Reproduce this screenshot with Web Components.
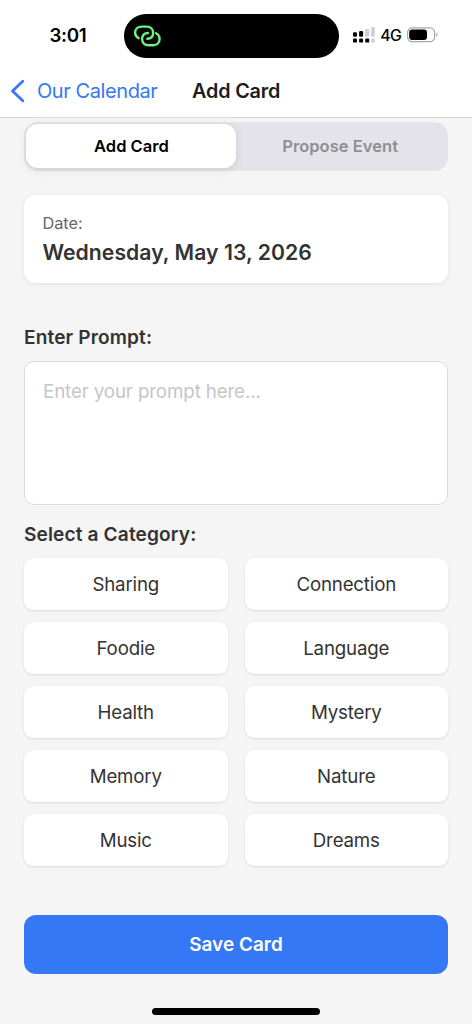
<!DOCTYPE html>
<html lang="en">
<head>
<meta charset="utf-8">
<title>Add Card</title>
<style>
html, body { margin: 0; height: 100%; background: #f5f5f5; }
body { font-family: Inter, "Liberation Sans", sans-serif; color: #333; overflow: hidden; }
</style>
</head>
<body>
<add-card-screen></add-card-screen>
<script>
function define(name, html) {
  const template = document.createElement('template');
  template.innerHTML = html;
  customElements.define(name, class extends HTMLElement {
    constructor() {
      super();
      this.attachShadow({ mode: 'open' }).appendChild(template.content.cloneNode(true));
    }
  });
}

define('status-bar', `
<style>
:host { display: grid; grid-template-columns: 124px 215px 1fr; height: 71px; box-sizing: border-box; padding-top: 13.5px; color: #000; }
.time { padding-left: 49.5px; font-size: 18.8px; font-weight: 600; line-height: 44px; letter-spacing: -.35px; white-space: nowrap; }
.island { height: 44px; border-radius: 22px; background: #000; }
.island svg { display: block; margin: 10px 0 0 8px; }
.right { display: flex; align-items: center; height: 43px; padding-left: 14px; }
.net { font-size: 15.8px; font-weight: 500; letter-spacing: -.6px; margin-left: 5.2px; width: 27.3px; white-space: nowrap; }
svg { flex: none; }
</style>
<div class="time">3:01</div>
<div class="island">
  <svg width="32" height="24" viewBox="0 0 32 24" fill="none" stroke="#6cf27d" stroke-width="2.4" stroke-linecap="round">
    <path d="M6.7 14.3 C4.4 13.1 3.1 11.2 3.1 8.8 C3.1 5 5.7 2.6 9.6 2.6 H14.6 C18.6 2.6 21.1 5 21.1 8.8 C21.1 12.6 18.8 14.8 15.3 14.8"/>
    <path d="M24 9.2 C26.4 10.4 27.6 12.3 27.6 14.8 C27.6 18.8 25.1 21.2 21.3 21.2 H16.6 C12.6 21.2 10.1 18.8 10.1 15 C10.1 11.2 12.4 9 15.9 9"/>
  </svg>
</div>
<div class="right">
  <svg width="22" height="16" viewBox="0 0 22 16">
    <g fill="#000"><rect x="0" y="5.2" width="4" height="4.6" rx="1.2"/><rect x="6.1" y="4" width="4" height="5.8" rx="1.2"/>
    <rect x="0" y="11.6" width="4" height="4" rx="1.2"/><rect x="6.1" y="11.6" width="4" height="4" rx="1.2"/><rect x="12.2" y="11.6" width="4" height="4" rx="1.2"/></g>
    <g fill="#cfcfcf"><rect x="12.2" y="2" width="4" height="7.8" rx="1.2"/><rect x="18.2" y="0" width="3.6" height="9.8" rx="1.2"/><rect x="18.2" y="11.6" width="3.6" height="4" rx="1.2"/></g>
  </svg>
  <span class="net">4G</span>
  <svg width="32" height="16" viewBox="0 0 32 16">
    <rect x=".6" y=".9" width="27" height="13.8" rx="4.6" fill="none" stroke="#a6a6a6" stroke-width="1.2"/>
    <rect x="2.2" y="2.6" width="17.8" height="10.4" rx="3" fill="#000"/>
    <path d="M29.2 6 Q30.6 6.4 30.6 7.8 Q30.6 9.2 29.2 9.6 Z" fill="#a6a6a6"/>
  </svg>
</div>`);

define('nav-header', `
<style>
:host { display: grid; grid-template-columns: 192px 1fr; align-items: center; height: 47px; box-sizing: border-box; padding-bottom: 7px; border-bottom: 1px solid #d8d8d8; }
.back { display: flex; align-items: center; padding-left: 10px; color: #3478f6; font-size: 20px; white-space: nowrap; }
.back svg { margin-right: 12px; flex: none; }
.back span { letter-spacing: -.42px; }
.title { font-size: 19.8px; font-weight: 600; color: #1c1c1e; letter-spacing: -.15px; white-space: nowrap; }
</style>
<div class="back">
  <svg width="15" height="24" viewBox="0 0 15 24" fill="none" stroke="#3478f6" stroke-width="2.8" stroke-linecap="round" stroke-linejoin="round"><path d="M12.8 2.2 L2.5 12 L12.8 21.8"/></svg>
  <span><slot name="back"></slot></span>
</div>
<div class="title"><slot></slot></div>`);

define('segment-control', `
<style>
:host { display: grid; grid-template-columns: 210px 1fr; height: 49px; box-sizing: border-box; padding: 2.4px 4px 2.6px 2.4px; border-radius: 14px; background: #e4e3e9; font-size: 16.5px; font-weight: 600; line-height: 44px; text-align: center; }
.on { background: #fff; border-radius: 12px; color: #000; box-shadow: 0 2px 8px rgba(0,0,0,.1); }
.off { color: #8e8e93; letter-spacing: .05px; }
</style>
<div class="on"><slot name="active"></slot></div>
<div class="off"><slot></slot></div>`);

define('date-card', `
<style>
:host { display: block; height: 88px; box-sizing: border-box; padding: 18px 18.4px; border-radius: 12px; background: #fff; box-shadow: 0 1px 5px rgba(0,0,0,.08); }
.label { font-size: 16.3px; line-height: 20px; color: #666; }
.value { margin-top: 6px; font-size: 21.2px; line-height: 26px; font-weight: 600; color: #333; letter-spacing: .04px; white-space: nowrap; }
</style>
<div class="label"><slot name="label"></slot></div>
<div class="value"><slot></slot></div>`);

define('field-label', `
<style>
:host { display: block; font-size: 19.1px; line-height: 24px; font-weight: 600; color: #333; letter-spacing: .13px; white-space: nowrap; }
</style><slot></slot>`);

define('prompt-box', `
<style>
:host { display: block; height: 144px; box-sizing: border-box; padding: 18px; border: 1px solid #dcdcdc; border-radius: 10px; background: #fff; color: #c6c6c8; font-size: 18.8px; line-height: 24px; letter-spacing: -.15px; }
</style><slot></slot>`);

define('category-grid', `
<style>
:host { display: grid; grid-template-columns: 1fr 1fr; grid-auto-rows: 52.2px; gap: 11.8px 17px; }
</style><slot></slot>`);

define('category-button', `
<style>
:host { display: block; border-radius: 9.6px; background: #fff; color: #333; font-size: 18.7px; line-height: 54px; height: 52.2px; text-align: center; letter-spacing: -.18px; box-shadow: 0 1px 3px rgba(0,0,0,.1); }
</style><slot></slot>`);

define('save-button', `
<style>
:host { display: block; height: 59px; border-radius: 12px; background: #3478f6; color: #fff; font-size: 18.9px; font-weight: 600; line-height: 59px; letter-spacing: .05px; text-align: center; }
</style><slot></slot>`);

define('home-indicator', `
<style>:host { display: block; width: 168px; height: 6.4px; border-radius: 4px; background: #000; }</style>`);

define('add-card-screen', `
<style>
:host { display: flex; flex-direction: column; height: 1024px; width: 472px; background: #f5f5f5; }
header { background: #fff; flex: none; }
main { flex: 1; padding: 3.5px 24px 0; }
date-card { margin-top: 24.3px; }
.l1 { margin-top: 41.8px; }
prompt-box { margin-top: 12.3px; }
.l2 { margin-top: 17.4px; }
category-grid { margin-top: 11.9px; }
save-button { margin-top: 48.4px; }
home-indicator { margin: 0 auto 9.4px; flex: none; }
</style>
<header>
  <status-bar></status-bar>
  <nav-header><span slot="back">Our Calendar</span>Add Card</nav-header>
</header>
<main>
  <segment-control><span slot="active">Add Card</span>Propose Event</segment-control>
  <date-card><span slot="label">Date:</span>Wednesday, May 13, 2026</date-card>
  <field-label class="l1">Enter Prompt:</field-label>
  <prompt-box>Enter your prompt here...</prompt-box>
  <field-label class="l2">Select a Category:</field-label>
  <category-grid>
    <category-button>Sharing</category-button><category-button>Connection</category-button>
    <category-button>Foodie</category-button><category-button>Language</category-button>
    <category-button>Health</category-button><category-button>Mystery</category-button>
    <category-button>Memory</category-button><category-button>Nature</category-button>
    <category-button>Music</category-button><category-button>Dreams</category-button>
  </category-grid>
  <save-button>Save Card</save-button>
</main>
<home-indicator></home-indicator>`);
</script>
</body>
</html>
